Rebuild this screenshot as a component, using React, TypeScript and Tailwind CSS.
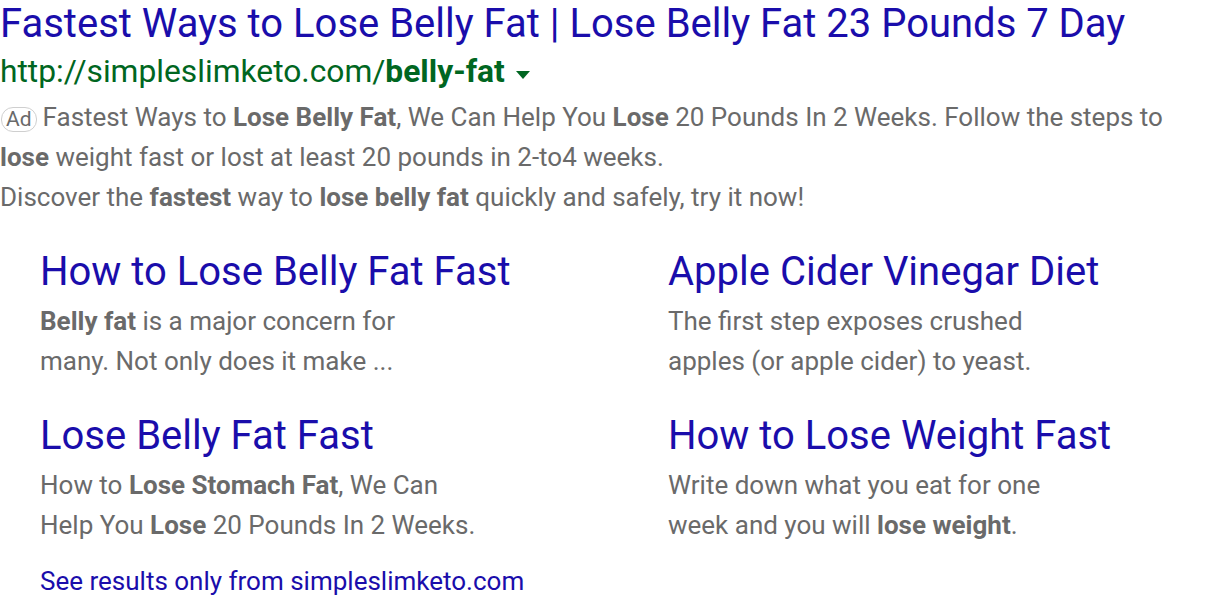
import React from "react";

const B = ({ children }: { children: React.ReactNode }) => (
  <span className="font-bold">{children}</span>
);

function Sub({
  title,
  l1,
  l2,
}: {
  title: string;
  l1: React.ReactNode;
  l2: React.ReactNode;
}) {
  return (
    <div className="flex flex-col">
      <div className="text-[40px] leading-[48px] text-[#1a0dab] whitespace-nowrap">{title}</div>
      <div className="mt-[5px] text-[26px] leading-[40px] text-[#6a6a6a] whitespace-nowrap">
        <div>{l1}</div>
        <div>{l2}</div>
      </div>
    </div>
  );
}

export default function App() {
  return (
    <div
      className="w-[1216px] h-[604px] bg-white overflow-hidden"
      style={{ fontFamily: "Roboto, 'Liberation Sans', sans-serif" }}
    >
      <div className="text-[40px] leading-[48px] text-[#1a0dab] whitespace-nowrap">
        Fastest Ways to Lose Belly Fat | Lose Belly Fat 23 Pounds 7 Day
      </div>
      <div className="flex items-center text-[31.75px] leading-[48px] text-[#006621] whitespace-nowrap">
        <span>
          http://simpleslimketo.com/<B>belly-fat</B>
        </span>
        <svg width="14" height="8" viewBox="0 0 14 8" className="ml-[11px] mt-[5px]">
          <path d="M0 0 L14 0 L7 8 Z" fill="#006621" />
        </svg>
      </div>
      <div className="mt-[1px] text-[26px] leading-[40px] text-[#6a6a6a] whitespace-nowrap">
        <div>
          <span className="inline-flex items-center justify-center h-[25px] px-[4px] ml-[1px] mr-[6px] rounded-[12px] border border-[#cfcfcf] text-[21px] leading-[21px] align-[0px]">
            Ad
          </span>
          Fastest Ways to <B>Lose Belly Fat</B>, We Can Help You <B>Lose</B> 20
          Pounds In 2 Weeks. Follow the steps to
        </div>
        <div>
          <B>lose</B> weight fast or lost at least 20 pounds in 2-to4 weeks.
        </div>
        <div>
          Discover the <B>fastest</B> way to <B>lose belly fat</B> quickly and
          safely, try it now!
        </div>
      </div>
      <div className="pl-[40px] mt-[31px] grid grid-cols-[628px_1fr] gap-y-[31px]">
        <Sub
          title="How to Lose Belly Fat Fast"
          l1={
            <>
              <B>Belly fat</B> is a major concern for
            </>
          }
          l2="many. Not only does it make ..."
        />
        <Sub
          title="Apple Cider Vinegar Diet"
          l1="The first step exposes crushed"
          l2="apples (or apple cider) to yeast."
        />
        <Sub
          title="Lose Belly Fat Fast"
          l1={
            <>
              How to <B>Lose Stomach Fat</B>, We Can
            </>
          }
          l2={
            <>
              Help You <B>Lose</B> 20 Pounds In 2 Weeks.
            </>
          }
        />
        <Sub
          title="How to Lose Weight Fast"
          l1="Write down what you eat for one"
          l2={
            <>
              week and you will <B>lose weight</B>.
            </>
          }
        />
      </div>
      <div className="pl-[40px] mt-[16px] text-[26px] leading-[40px] text-[#1a0dab] whitespace-nowrap">
        See results only from simpleslimketo.com
      </div>
    </div>
  );
}
